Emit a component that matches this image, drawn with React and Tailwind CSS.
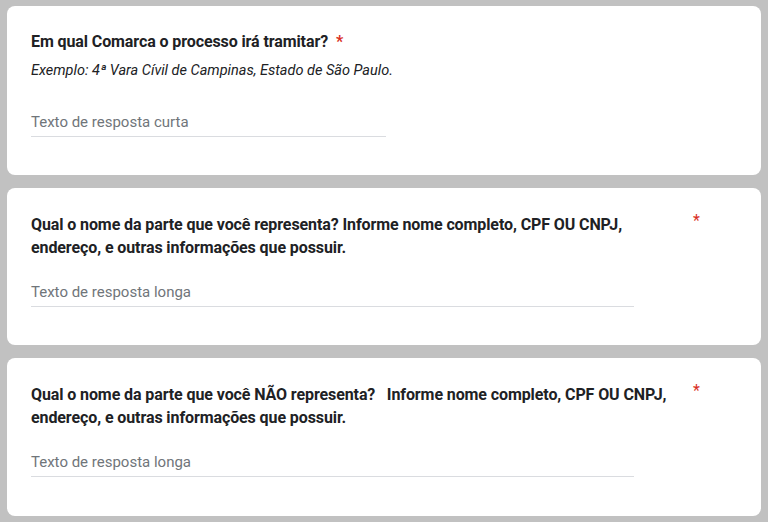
const font = { fontFamily: "Roboto, 'Noto Sans', sans-serif" };

function Question({ title, hint, placeholder, lineWidth, star, className }) {
  return (
    <div className={`bg-white rounded-lg mx-[7px] px-6 ${className}`}>
      <div className="flex items-start">
        <div className="w-[655px]">
          <h2 className="text-[16px] leading-[23px] font-bold tracking-[-0.1px] text-[#202124] whitespace-pre-wrap">
            {title}
            {star === "inline" && <span className="text-[#d93025] ml-2">*</span>}
          </h2>
          {hint && (
            <p className="mt-[8px] text-[14.5px] leading-[20px] italic text-[#202124]">{hint}</p>
          )}
        </div>
        {star === "right" && (
          <span className="text-[#d93025] text-[16px] leading-[23px] ml-[7px] -mt-[4px]">*</span>
        )}
      </div>
      <div className={`text-[15px] leading-[20px] text-[#70757a] border-b border-[#dadce0] pb-[4px] ${lineWidth}`}>
        {placeholder}
      </div>
    </div>
  );
}

export default function App() {
  return (
    <div className="w-[768px] h-[522px] bg-[#c1c1c1] pt-[6px] overflow-hidden" style={font}>
      <Question
        className="h-[169px] pt-[24px]"
        title="Em qual Comarca o processo irá tramitar?"
        hint="Exemplo: 4ª Vara Cívil de Campinas, Estado de São Paulo."
        placeholder="Texto de resposta curta"
        lineWidth="w-[355px] mt-[31px]"
        star="inline"
      />
      <Question
        className="h-[157px] mt-[13px] pt-[25px]"
        title="Qual o nome da parte que você representa? Informe nome completo, CPF OU CNPJ, endereço, e outras informações que possuir."
        placeholder="Texto de resposta longa"
        lineWidth="w-[603px] mt-[23px]"
        star="right"
      />
      <Question
        className="h-[158px] mt-[13px] pt-[25px]"
        title="Qual o nome da parte que você NÃO representa?   Informe nome completo, CPF OU CNPJ, endereço, e outras informações que possuir."
        placeholder="Texto de resposta longa"
        lineWidth="w-[603px] mt-[23px]"
        star="right"
      />
    </div>
  );
}
